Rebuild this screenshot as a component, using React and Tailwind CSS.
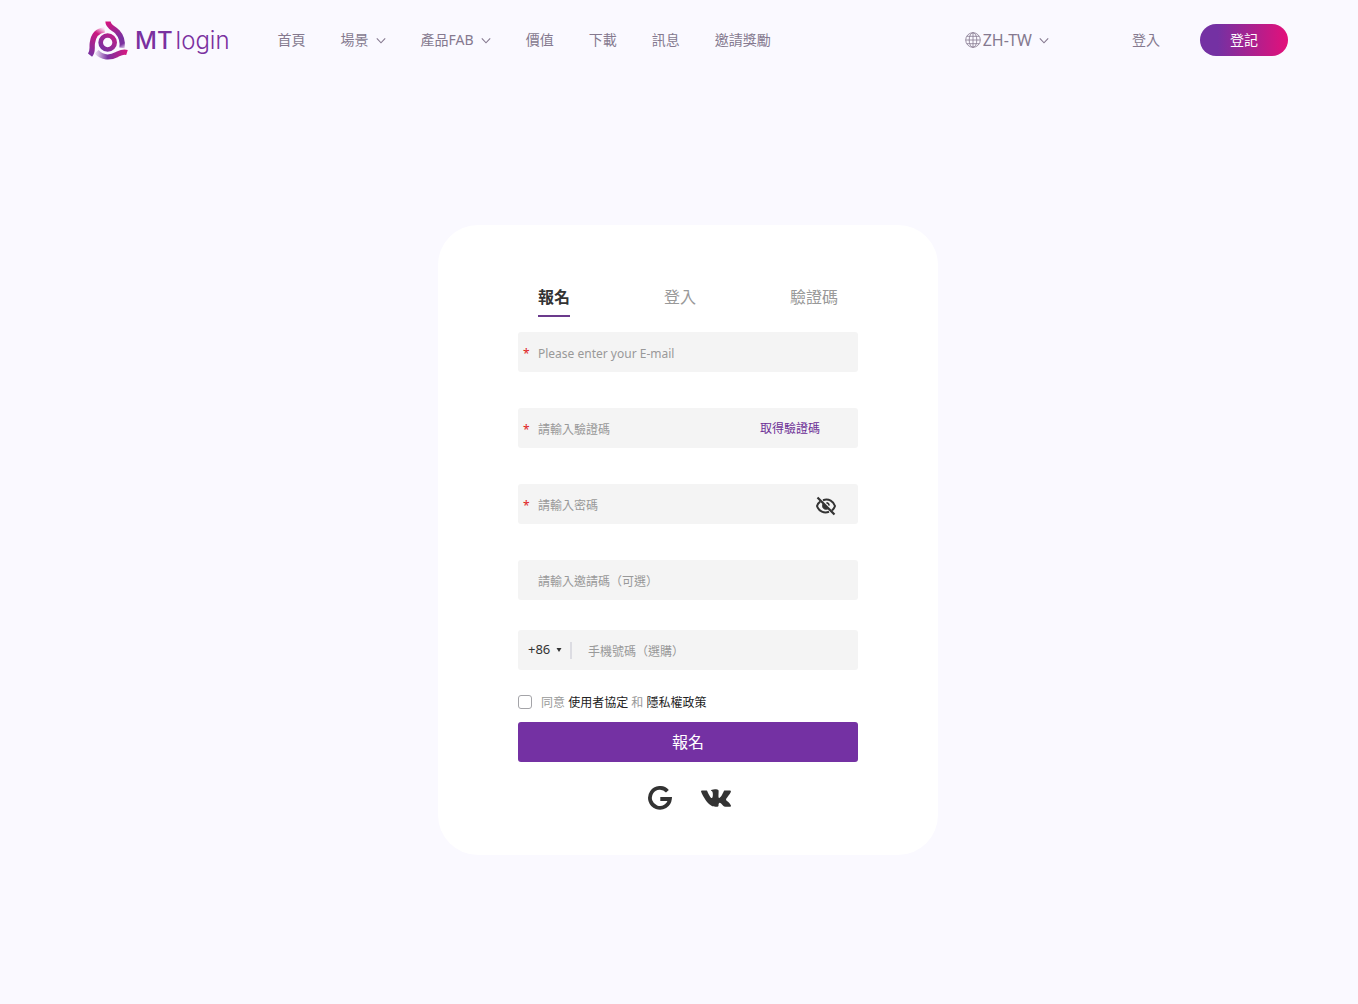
import {useState} from 'react';

const navItems = [
    {label: '首頁'},
    {label: '場景', menu: true},
    {label: '產品FAB', menu: true},
    {label: '價值'},
    {label: '下載'},
    {label: '訊息'},
    {label: '邀請獎勵'},
];

const tabs = ['報名', '登入', '驗證碼'];

function Chevron() {
    return (
        <svg className="h-[10px] w-[10px]" viewBox="0 0 10 10" fill="none" stroke="currentColor" strokeWidth="1.1" aria-hidden="true">
            <path d="M0.8 3.4 L5 7.8 L9.2 3.4"/>
        </svg>
    );
}

function LogoMark() {
    return (
        <svg className="h-[39px] w-10" viewBox="0 0 120 116" fill="none" aria-hidden="true">
            <defs>
                <linearGradient id="armTop" x1="58" y1="0" x2="104" y2="84" gradientUnits="userSpaceOnUse">
                    <stop offset="0" stopColor="#d8127c"/>
                    <stop offset="0.65" stopColor="#7a31a0"/>
                    <stop offset="0.85" stopColor="#7a31a0"/>
                    <stop offset="1" stopColor="#7a31a0" stopOpacity="0.2"/>
                </linearGradient>
                <linearGradient id="armLeft" x1="6" y1="100" x2="52" y2="26" gradientUnits="userSpaceOnUse">
                    <stop offset="0" stopColor="#7a31a0"/>
                    <stop offset="0.75" stopColor="#cc1880"/>
                    <stop offset="1" stopColor="#dc147e" stopOpacity="0.1"/>
                </linearGradient>
                <linearGradient id="armBottom" x1="118" y1="94" x2="22" y2="88" gradientUnits="userSpaceOnUse">
                    <stop offset="0" stopColor="#d8177f"/>
                    <stop offset="0.6" stopColor="#7a31a0"/>
                    <stop offset="1" stopColor="#7a31a0" stopOpacity="0.1"/>
                </linearGradient>
                <linearGradient id="ring" x1="75" y1="45" x2="42" y2="84" gradientUnits="userSpaceOnUse">
                    <stop offset="0" stopColor="#b8208a"/>
                    <stop offset="1" stopColor="#7a31a0"/>
                </linearGradient>
            </defs>
            <path d="M60 1 C60 18 78 20 88 32 C100 45 105 60 102 80" stroke="url(#armTop)" strokeWidth="16"/>
            <path d="M6 102 C16 90 11 80 13 66 C16 42 30 28 50 26" stroke="url(#armLeft)" strokeWidth="16"/>
            <path d="M117 94 C104 90 97 95 87 100 C66 111 42 110 26 92" stroke="url(#armBottom)" strokeWidth="16"/>
            <circle cx="59" cy="64" r="21" stroke="url(#ring)" strokeWidth="14"/>
        </svg>
    );
}

function GlobeIcon() {
    return (
        <svg className="h-4 w-4" viewBox="0 0 16 16" fill="none" stroke="currentColor" strokeWidth="0.8" aria-hidden="true">
            <circle cx="8" cy="8" r="7.3"/>
            <ellipse cx="8" cy="8" rx="3.8" ry="7.3"/>
            <path d="M8 0.7 V15.3 M0.7 8 H15.3 M1.8 4.3 H14.2 M1.8 11.7 H14.2"/>
        </svg>
    );
}

function EyeOffIcon() {
    return (
        <svg className="h-5 w-5" viewBox="0 0 20 20" fill="none" stroke="currentColor" strokeWidth="2" aria-hidden="true">
            <path d="M7 4.2 C13 2.2 17.5 5.6 19 10 C18.4 11.8 17.4 13.3 16 14.4"/>
            <path d="M4.2 5.6 C2.6 6.7 1.5 8.2 1 10 C2.8 15.5 8.2 17.6 13 15.8"/>
            <path d="M7 8 C5.4 11.5 8.2 14.2 11.8 13 Z" fill="currentColor" strokeWidth="1"/>
            <path d="M10.4 6.8 C12 7 13 8 13.2 9.6" strokeWidth="1.4"/>
            <path d="M1.5 1.5 L18.5 18.5" strokeWidth="2.2"/>
        </svg>
    );
}

function GoogleIcon() {
    return (
        <svg className="h-6 w-6" viewBox="0 0 24 24" fill="none" stroke="currentColor" strokeWidth="3.8" aria-hidden="true">
            <path d="M19.4 5.2 A10 10 0 1 0 21.9 13 H12.3"/>
        </svg>
    );
}

function VkIcon() {
    return (
        <svg className="h-[30px] w-[30px]" viewBox="0 0 24 24" fill="currentColor" aria-hidden="true">
            <path d="M13.162 18.994c.609 0 .858-.406.851-.915-.031-1.917.714-2.949 2.059-1.604 1.488 1.488 1.796 2.519 3.603 2.519h3.2c.808 0 1.126-.26 1.126-.668 0-.863-1.421-2.386-2.625-3.504-1.686-1.565-1.765-1.602-.313-3.486 1.801-2.339 4.157-5.336 2.073-5.336h-3.981c-.772 0-.828.435-1.103 1.083-.995 2.347-2.886 5.387-3.604 4.922-.751-.485-.407-2.406-.35-5.261.015-.754.011-1.271-1.141-1.539-.629-.145-1.241-.205-1.809-.205-2.273 0-3.841.953-2.95 1.119 1.571.293 1.42 3.692 1.054 5.16-.638 2.556-3.036-2.024-4.035-4.305-.241-.548-.315-.974-1.175-.974H.787c-.492 0-.787.16-.787.516 0 .602 2.96 6.72 5.786 9.77 2.756 2.975 5.48 2.708 7.376 2.708z"/>
        </svg>
    );
}

function Header() {
    return (
        <header className="mx-auto flex h-20 w-full max-w-[1200px] items-center text-sm text-[#85798f]">
            <a href="#" className="flex items-center gap-[7px] text-[#7a31a0]">
                <LogoMark/>
                <span className="flex items-baseline gap-[3px] pt-0.5 font-['Inter',sans-serif] text-2xl leading-8">
                    <span className="font-medium">MT</span>
                    <span className="font-light">login</span>
                </span>
            </a>
            <nav className="ml-12 flex items-center gap-[35px]">
                {navItems.map((item) => (
                    <a href="#" key={item.label} className="flex items-center gap-[7px] whitespace-nowrap">
                        {item.label}
                        {item.menu && <Chevron/>}
                    </a>
                ))}
            </nav>
            <button className="ml-auto flex items-center gap-[7px] text-base">
                <span className="flex items-center gap-0.5"><GlobeIcon/>ZH-TW</span>
                <Chevron/>
            </button>
            <a href="#" className="ml-[83px]">登入</a>
            <button className="ml-10 h-8 w-[88px] rounded-full bg-linear-to-r/srgb from-[#7431a3] from-20% to-[#e4107a] text-white">
                登記
            </button>
        </header>
    );
}

function Field({label, type = 'text', required, children}) {
    return (
        <div className="flex h-10 items-center rounded-[3px] bg-[#f4f4f4] pr-5">
            <span className="w-5 pl-[5px] pt-1 text-[#e02020]">{required && '*'}</span>
            <input
                type={type}
                aria-label={label}
                placeholder={label}
                required={required}
                className="h-full min-w-0 flex-1 bg-transparent pt-0.5 text-[#333] outline-none placeholder:text-[#999]"
            />
            {children}
        </div>
    );
}

export default function App() {
    const [tab, setTab] = useState('報名');
    const [showPassword, setShowPassword] = useState(false);

    return (
        <div className="min-h-screen bg-[#faf9ff] pl-[18px] font-['Noto_Sans','Noto_Sans_CJK_TC',sans-serif]">
            <Header/>
            <main className="flex justify-center px-4 py-[145px]">
                <form className="w-full max-w-[500px] rounded-[40px] bg-white px-20 pb-[45px] pt-[60px] text-xs">
                    <div className="flex justify-between px-5 text-base">
                        {tabs.map((name) => (
                            <button
                                type="button"
                                key={name}
                                onClick={() => setTab(name)}
                                className={name === tab
                                    ? 'h-8 border-b-2 border-[#6b3a8c] pb-1.5 font-bold text-[#333]'
                                    : 'h-8 border-b-2 border-transparent pb-1.5 text-[#999]'}
                            >
                                {name}
                            </button>
                        ))}
                    </div>

                    <div className="mt-[15px] flex flex-col gap-9">
                        <Field label="Please enter your E-mail" type="email" required/>
                        <Field label="請輸入驗證碼" required>
                            <button type="button" className="mr-[18px] pt-0.5 text-[#6d2f96]">取得驗證碼</button>
                        </Field>
                        <Field label="請輸入密碼" type={showPassword ? 'text' : 'password'} required>
                            <button type="button" aria-label="顯示密碼" className="mr-0.5 pt-1 text-[#333]" onClick={() => setShowPassword(!showPassword)}>
                                <EyeOffIcon/>
                            </button>
                        </Field>
                        <Field label="請輸入邀請碼（可選）"/>
                    </div>

                    <div className="mt-[30px] flex h-10 items-center rounded-[3px] bg-[#f4f4f4] pl-2.5 pr-5 text-[#333]">
                        <select aria-label="國碼" className="w-7 appearance-none bg-transparent text-[13px] outline-none">
                            <option>+86</option>
                        </select>
                        <svg className="h-1 w-[6px]" viewBox="0 0 6 4" fill="currentColor" aria-hidden="true">
                            <path d="M0.5 0 H5.5 L3 4 Z"/>
                        </svg>
                        <span className="ml-2 h-[17px] w-0.5 bg-[#dcdce2]"/>
                        <input
                            type="tel"
                            aria-label="手機號碼（選購）"
                            placeholder="手機號碼（選購）"
                            className="ml-4 h-full min-w-0 flex-1 bg-transparent pt-0.5 outline-none placeholder:text-[#999]"
                        />
                    </div>

                    <div className="mt-6 flex h-4 items-center gap-[9px] text-[#999]">
                        <input id="agree" type="checkbox" className="h-3.5 w-3.5 appearance-none rounded-[3px] border border-[#a4a4a8] bg-white checked:bg-[#7431a3]"/>
                        <label htmlFor="agree" className="pt-0.5">
                            同意 <a href="#" className="text-[#222]">使用者協定</a> 和 <a href="#" className="text-[#222]">隱私權政策</a>
                        </label>
                    </div>

                    <button type="button" className="mt-3 h-10 w-full rounded-[3px] bg-[#7431a3] text-base text-white">
                        報名
                    </button>

                    <div className="mt-6 flex h-6 items-center justify-center gap-[29px] pl-[3px] text-[#333]">
                        <button type="button" aria-label="Google"><GoogleIcon/></button>
                        <button type="button" aria-label="VK"><VkIcon/></button>
                    </div>
                </form>
            </main>
        </div>
    );
}
